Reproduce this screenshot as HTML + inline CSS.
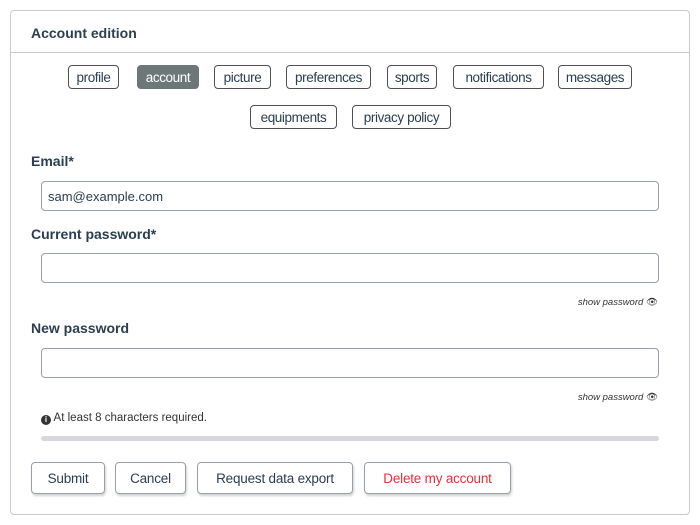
<!DOCTYPE html>
<html><head><style>
*{box-sizing:border-box;margin:0;padding:0}
body{width:700px;height:525px;background:#fff;font-family:"Liberation Sans",sans-serif;color:#2c3e50;position:relative;overflow:hidden}
.card{position:absolute;left:10px;top:10px;width:680px;height:505px;border:1px solid #c8cad0;border-radius:4px}
.hr{position:absolute;left:10px;top:52px;width:680px;height:1px;background:#c8cad0}
.a{position:absolute;white-space:nowrap}
.title{left:31px;top:25px;font-weight:bold;font-size:14px}
.tab{position:absolute;height:24px;border:1px solid #4d5156;border-radius:4px;font-size:13.5px;line-height:23px;text-align:center;color:#2c3e50;letter-spacing:-0.4px}
.tab.on{background:#6c7878;border-color:#6c7878;color:#fff}
.lbl{left:31px;font-weight:bold;font-size:14px}
.inp{position:absolute;left:41px;width:618px;height:30px;border:1px solid #9aa0a8;border-radius:4px;font-size:13px;line-height:29px;padding-left:6px}
.show{font-size:9.5px;font-style:italic;right:42px;color:#333}
.btn{position:absolute;top:462px;height:32px;border:1px solid #9aa0a8;border-radius:4px;font-size:13.5px;line-height:31px;text-align:center;box-shadow:1px 2px 2px rgba(0,0,0,.18);color:#2c3e50;letter-spacing:-0.2px}
</style></head><body>
<div class="card"></div><div class="hr"></div>
<div class="a title">Account edition</div>
<div class="tab" style="left:68px;top:65px;width:51px">profile</div>
<div class="tab on" style="left:137px;top:65px;width:62px">account</div>
<div class="tab" style="left:214px;top:65px;width:57px">picture</div>
<div class="tab" style="left:286px;top:65px;width:85px">preferences</div>
<div class="tab" style="left:387px;top:65px;width:50px">sports</div>
<div class="tab" style="left:453px;top:65px;width:91px">notifications</div>
<div class="tab" style="left:558px;top:65px;width:74px">messages</div>
<div class="tab" style="left:250px;top:105px;width:87px">equipments</div>
<div class="tab" style="left:352px;top:105px;width:99px">privacy policy</div>
<div class="a lbl" style="top:153px">Email*</div>
<div class="inp" style="top:181px">sam@example.com</div>
<div class="a lbl" style="top:226px">Current password*</div>
<div class="inp" style="top:253px"></div>
<div class="a show" style="top:297px">show password <span style="font-style:normal">&#128065;</span></div>
<div class="a lbl" style="top:320px">New password</div>
<div class="inp" style="top:348px"></div>
<div class="a show" style="top:392px">show password <span style="font-style:normal">&#128065;</span></div>
<div class="a" style="left:41px;top:412px;font-size:11.5px;color:#333"><span style="display:inline-block;width:10px;height:10px;border-radius:50%;background:#333;color:#fff;font-size:8px;line-height:10px;text-align:center;font-weight:bold;vertical-align:-1px">i</span> At least 8 characters required.</div>
<div class="a" style="left:41px;top:436px;width:618px;height:5px;background:#d5d8dc;border-radius:3px"></div>
<div class="btn" style="left:31px;width:74px">Submit</div>
<div class="btn" style="left:115px;width:71px">Cancel</div>
<div class="btn" style="left:197px;width:156px">Request data export</div>
<div class="btn" style="left:364px;width:147px;color:#e0323c">Delete my account</div>
</body></html>
